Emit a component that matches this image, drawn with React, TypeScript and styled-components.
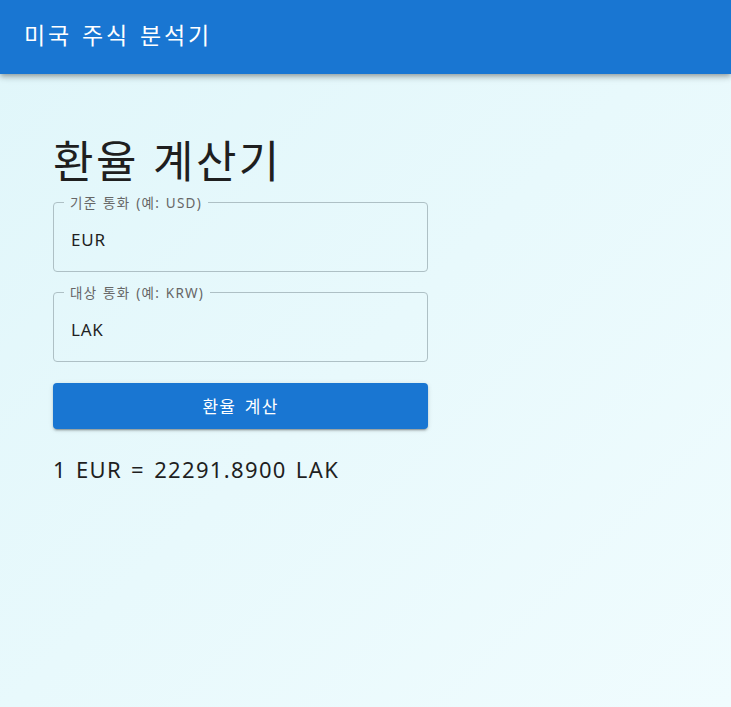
import React, { useState } from "react";
import styled, { createGlobalStyle } from "styled-components";

const FONT = `"Noto Sans", "Noto Sans CJK KR", sans-serif`;

const Global = createGlobalStyle`
  html, body { margin: 0; padding: 0; height: 100%; }
  body {
    font-family: ${FONT};
    background: linear-gradient(135deg, #e0f6fa 0%, #eefbfd 100%);
    min-height: 707px;
  }
  #root { min-height: 707px; }
`;

const Page = styled.div`
  min-height: 707px;
  display: flex;
  flex-direction: column;
  background: linear-gradient(135deg, #e0f6fa 0%, #f0fcfe 100%);
`;

const AppBar = styled.header`
  height: 74px;
  background: #1976d2;
  color: #fff;
  display: flex;
  align-items: center;
  padding: 0 24px;
  box-shadow: 0 2px 4px -1px rgba(0,0,0,0.2), 0 4px 5px 0 rgba(0,0,0,0.14), 0 1px 10px 0 rgba(0,0,0,0.12);
`;

const AppTitle = styled.h1`
  margin: 0;
  font-size: 23px;
  font-weight: 400;
  letter-spacing: 2.9px;
  word-spacing: 1px;
  line-height: 1;
  position: relative;
  top: -2px;
`;

const Main = styled.main`
  padding: 61px 53px 0;
  display: flex;
  flex-direction: column;
  width: 375px;
`;

const Heading = styled.h2`
  margin: 0 0 7px;
  font-size: 44px;
  font-weight: 400;
  color: #1f1f1f;
  line-height: 1.2;
  letter-spacing: 2.5px;
`;

const Field = styled.div`
  position: relative;
  height: 69px;
  margin-top: 8px;
  margin-bottom: 13px;
`;

const Outline = styled.fieldset`
  position: absolute;
  inset: -6px 0 0 0;
  margin: 0;
  padding: 0 10px;
  border: 1px solid #aec0c5;
  border-radius: 4px;
  pointer-events: none;
`;

const Legend = styled.legend`
  padding: 0 6px;
  font-size: 13.5px;
  line-height: 12px;
  color: #666;
  letter-spacing: 1.25px;
  word-spacing: 1px;
  font-family: ${FONT};
`;

const Input = styled.input`
  box-sizing: border-box;
  width: 100%;
  height: 100%;
  border: none;
  background: transparent;
  outline: none;
  padding: 4px 18px 0;
  font-size: 17px;
  letter-spacing: 0.8px;
  color: #1f1f1f;
  font-family: ${FONT};
`;

const Button = styled.button`
  margin-top: 8px;
  height: 46px;
  width: 100%;
  border: none;
  border-radius: 4px;
  background: #1976d2;
  color: #fff;
  font-size: 17px;
  letter-spacing: 1.2px;
  word-spacing: 3px;
  font-family: ${FONT};
  font-weight: 400;
  box-shadow: 0 3px 1px -2px rgba(0,0,0,0.2), 0 2px 2px 0 rgba(0,0,0,0.14), 0 1px 5px 0 rgba(0,0,0,0.12);
  cursor: pointer;
`;

const Result = styled.p`
  margin: 24px 0 0;
  font-size: 22px;
  color: #1f1f1f;
  line-height: 1.5;
  letter-spacing: 1.35px;
  word-spacing: 2px;
`;

function TextField({ label, value, onChange }: { label: string; value: string; onChange: (v: string) => void }) {
  return (
    <Field>
      <Outline>
        <Legend>{label}</Legend>
      </Outline>
      <Input value={value} onChange={(e) => onChange(e.target.value)} />
    </Field>
  );
}

export default function App() {
  const [base, setBase] = useState("EUR");
  const [target, setTarget] = useState("LAK");
  return (
    <Page>
      <Global />
      <AppBar>
        <AppTitle>미국 주식 분석기</AppTitle>
      </AppBar>
      <Main>
        <Heading>환율 계산기</Heading>
        <TextField label="기준 통화 (예: USD)" value={base} onChange={setBase} />
        <TextField label="대상 통화 (예: KRW)" value={target} onChange={setTarget} />
        <Button>환율 계산</Button>
        <Result>1 EUR = 22291.8900 LAK</Result>
      </Main>
    </Page>
  );
}
